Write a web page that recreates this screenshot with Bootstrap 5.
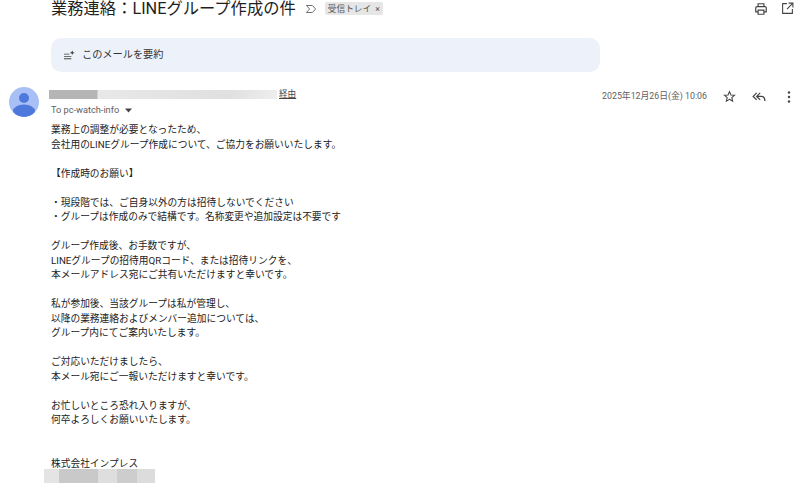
<!DOCTYPE html>
<html lang="ja">
<head>
<meta charset="utf-8">
<title>業務連絡</title>
<link href="https://cdn.jsdelivr.net/npm/bootstrap@5.3.0/dist/css/bootstrap.min.css" rel="stylesheet">
<style>
html,body{height:494px;overflow:hidden;background:#fff}
body{font-family:"Roboto","Noto Sans CJK JP",sans-serif;color:#222}
.mail-wrap{padding-left:51px;padding-right:5px}
.subject-row{height:17px;margin-bottom:21px}
.subject-text{font-size:16.3px;line-height:17px;color:#1f1f1f;margin:0;font-weight:400}
.subject-mark{margin-left:9px}
.inbox-chip{background:#e6e6e6;border-radius:2px;font-size:8.7px;line-height:12px;height:13px;padding:0 3px;color:#555;margin-left:8px}
.summary-box{width:549px;height:34px;background:#edf2fa;border-radius:10px;font-size:10.2px;padding-left:13px;color:#333;gap:7px;margin-bottom:15px}
.avatar-col{width:49px;padding-left:9px;flex:none}
.avatar-disc{width:30px;height:30px;border-radius:50%;background:#a8c0f5;overflow:hidden}
.sender-row{padding-top:3px}
.sender-bar{width:228px;height:9px;background:linear-gradient(90deg,#b5b5b5 0,#b5b5b5 48px,#e8e8e8 49px,#e0e0e0 180px,#eee 228px)}
.via-link{font-size:8.6px;text-decoration:underline;color:#444;margin-left:2px;line-height:9px}
.to-line{font-size:9.2px;color:#5e5e5e;line-height:12px;margin-top:5px;padding-left:2px}
.date-text{font-size:8.8px;color:#5e5e5e;margin-right:16px}
.meta-icon{margin-right:16px}
.meta-icon-last{margin-right:21px}
.body-text{font-size:9.72px;line-height:14.52px;color:#222;margin-top:7px;padding-left:2px;white-space:pre-line}
.redact-row{height:14px;width:111px;margin-left:-5px;margin-top:-2px;background:linear-gradient(90deg,#e4e4e4 0,#e4e4e4 15px,#c9c9c9 15px,#c9c9c9 54px,#dedede 54px,#dedede 73px,#cdcdcd 73px,#cdcdcd 93px,#dcdcdc 93px)}
.right-icons{gap:13px;margin-right:1px}
.meta-wrap{margin-right:9px}
</style>
</head>
<body>
<div class="mail-wrap">
  <div class="subject-row d-flex align-items-center">
    <h1 class="subject-text">業務連絡：LINEグループ作成の件</h1>
    <svg class="subject-mark" width="12" height="10" viewBox="0 0 13 10" fill="none" stroke="#666" stroke-width="1"><path d="M1.500 1.200H8L11.500 5 8 8.800H1.500L5 5Z"/></svg>
    <span class="inbox-chip d-flex align-items-center">受信トレイ<span class="ms-1">×</span></span>
    <div class="ms-auto d-flex right-icons align-items-center">
      <svg width="14" height="14" viewBox="0 0 24 24" fill="none" stroke="#444" stroke-width="2"><path d="M7 8V3h10v5M7 17H3v-7a2 2 0 0 1 2-2h14a2 2 0 0 1 2 2v7h-4"/><path d="M7 14h10v7H7z"/></svg>
      <svg width="13" height="13" viewBox="0 0 24 24" fill="none" stroke="#444" stroke-width="2"><path d="M11 3H3v18h18v-8"/><path d="M14 2h8v8M22 2 11 13"/></svg>
    </div>
  </div>
  <div class="summary-box d-flex align-items-center">
    <svg width="11" height="10" viewBox="0 0 12 10" fill="#444"><path d="M0 3.500h6v1H0zM0 6h8v1H0zM0 8.500h8v1H0z"/><path d="M9 0l.8 1.700L11.500 2.500 9.800 3.300 9 5 8.200 3.300 6.500 2.500 8.200 1.700z"/></svg>
    <span>このメールを要約</span>
  </div>
</div>
<div class="d-flex">
  <div class="avatar-col">
    <div class="avatar-disc">
      <svg width="30" height="30" viewBox="0 0 30 30" fill="#4f78dc"><circle cx="15" cy="11" r="5"/><ellipse cx="15" cy="24" rx="11" ry="6.500"/></svg>
    </div>
  </div>
  <div class="flex-grow-1">
    <div class="d-flex align-items-start sender-row meta-wrap">
      <div>
        <div class="d-flex align-items-center"><div class="sender-bar"></div><span class="via-link">経由</span></div>
        <div class="to-line">To pc-watch-info <svg width="7" height="5" viewBox="0 0 7 5" class="ms-1"><path d="M0 .5h7L3.500 4.500z" fill="#444"/></svg></div>
      </div>
      <div class="ms-auto d-flex align-items-center">
        <span class="date-text">2025年12月26日(金) 10:06</span>
        <svg class="meta-icon" width="13" height="13" viewBox="0 0 24 24" fill="none" stroke="#444" stroke-width="2"><path d="M12 3l2.700 6.100 6.600.6-5 4.400 1.500 6.500L12 17.200 6.200 20.600l1.500-6.500-5-4.400 6.600-.6z"/></svg>
        <svg class="meta-icon-last" width="14" height="12" viewBox="0 0 24 20" fill="none" stroke="#444" stroke-width="2.200"><path d="M8 3 2 9l6 6M14 3 8 9l6 6M8 9h8c4 0 6 3 6 8"/></svg>
        <svg width="4" height="12" viewBox="0 0 4 12" fill="#444"><circle cx="2" cy="1.500" r="1.200"/><circle cx="2" cy="6" r="1.200"/><circle cx="2" cy="10.500" r="1.200"/></svg>
      </div>
    </div>
    <div class="body-text">業務上の調整が必要となったため、
会社用のLINEグループ作成について、ご協力をお願いいたします。

【作成時のお願い】

・現段階では、ご自身以外の方は招待しないでください
・グループは作成のみで結構です。名称変更や追加設定は不要です

グループ作成後、お手数ですが、
LINEグループの招待用QRコード、または招待リンクを、
本メールアドレス宛にご共有いただけますと幸いです。

私が参加後、当該グループは私が管理し、
以降の業務連絡およびメンバー追加については、
グループ内にてご案内いたします。

ご対応いただけましたら、
本メール宛にご一報いただけますと幸いです。

お忙しいところ恐れ入りますが、
何卒よろしくお願いいたします。


株式会社インプレス</div>
    <div class="redact-row"></div>
  </div>
</div>
</body>
</html>
